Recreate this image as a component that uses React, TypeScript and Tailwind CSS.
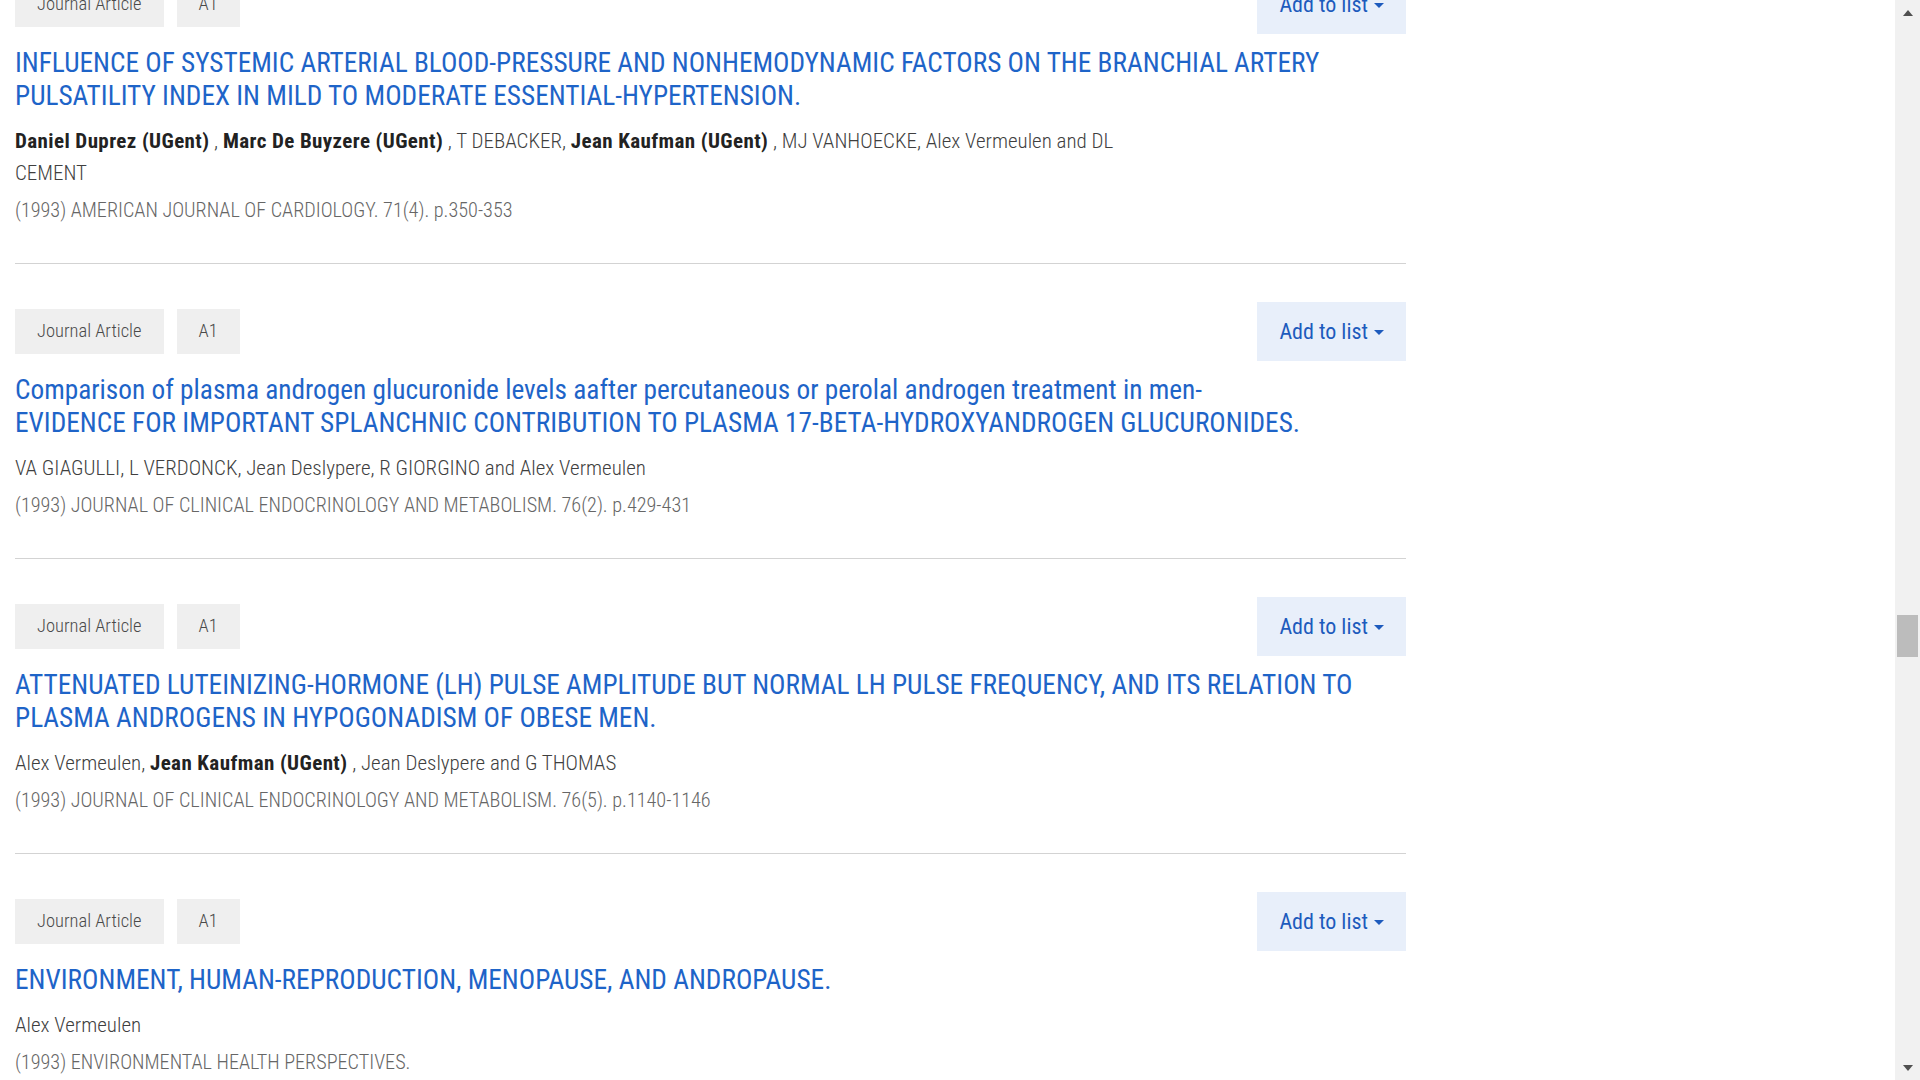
type Author = { name: string; ugent?: boolean };

type Publication = {
  id: number;
  title: string;
  authors: Author[];
  source: string;
};

const publications: Publication[] = [
  {
    id: 1,
    title:
      "INFLUENCE OF SYSTEMIC ARTERIAL BLOOD-PRESSURE AND NONHEMODYNAMIC FACTORS ON THE BRANCHIAL ARTERY PULSATILITY INDEX IN MILD TO MODERATE ESSENTIAL-HYPERTENSION.",
    authors: [
      { name: "Daniel Duprez (UGent)", ugent: true },
      { name: "Marc De Buyzere (UGent)", ugent: true },
      { name: "T DEBACKER" },
      { name: "Jean Kaufman (UGent)", ugent: true },
      { name: "MJ VANHOECKE" },
      { name: "Alex Vermeulen" },
      { name: "DL CEMENT" },
    ],
    source: "(1993) AMERICAN JOURNAL OF CARDIOLOGY. 71(4). p.350-353",
  },
  {
    id: 2,
    // the original title breaks right after "men-"
    title:
      "Comparison of plasma androgen glucuronide levels aafter percutaneous or perolal androgen treatment in men-\nEVIDENCE FOR IMPORTANT SPLANCHNIC CONTRIBUTION TO PLASMA 17-BETA-HYDROXYANDROGEN GLUCURONIDES.",
    authors: [
      { name: "VA GIAGULLI" },
      { name: "L VERDONCK" },
      { name: "Jean Deslypere" },
      { name: "R GIORGINO" },
      { name: "Alex Vermeulen" },
    ],
    source: "(1993) JOURNAL OF CLINICAL ENDOCRINOLOGY AND METABOLISM. 76(2). p.429-431",
  },
  {
    id: 3,
    title:
      "ATTENUATED LUTEINIZING-HORMONE (LH) PULSE AMPLITUDE BUT NORMAL LH PULSE FREQUENCY, AND ITS RELATION TO PLASMA ANDROGENS IN HYPOGONADISM OF OBESE MEN.",
    authors: [
      { name: "Alex Vermeulen" },
      { name: "Jean Kaufman (UGent)", ugent: true },
      { name: "Jean Deslypere" },
      { name: "G THOMAS" },
    ],
    source: "(1993) JOURNAL OF CLINICAL ENDOCRINOLOGY AND METABOLISM. 76(5). p.1140-1146",
  },
  {
    id: 4,
    title: "ENVIRONMENT, HUMAN-REPRODUCTION, MENOPAUSE, AND ANDROPAUSE.",
    authors: [{ name: "Alex Vermeulen" }],
    source: "(1993) ENVIRONMENTAL HEALTH PERSPECTIVES.",
  },
];

function AuthorList({ authors }: { authors: Author[] }) {
  return (
    <p className="mt-[12px] max-w-[1130px] text-[21px] leading-[32px] font-light text-[#3f3f3f]">
      {authors.map((a, i) => {
        const last = i === authors.length - 1;
        const sep = last ? "" : i === authors.length - 2 ? " and " : a.ugent ? " , " : ", ";
        return (
          <span key={a.name}>
            {a.ugent ? (
              <span className="font-bold tracking-[0.4px] text-[#222]">{a.name}</span>
            ) : (
              a.name
            )}
            {sep}
          </span>
        );
      })}
    </p>
  );
}

function Badge({ children }: { children: React.ReactNode }) {
  return (
    <span className="flex h-[45px] items-center bg-[#efefef] px-[22px] text-[18.5px] font-light text-[#4a4a4a]">
      {children}
    </span>
  );
}

function PublicationItem({ pub }: { pub: Publication }) {
  return (
    <article className="border-t border-[#d3d3d3] pt-[38px] pb-[38px]">
      <div className="flex h-[59px] items-center justify-between">
        <div className="flex gap-[13px]">
          <Badge>Journal Article</Badge>
          <Badge>A1</Badge>
        </div>
        <button className="flex h-[59px] items-center gap-[6px] bg-[#e8effa] px-[22px] text-[22px] text-[#1d5bbd]">
          Add to list
          <span className="mt-[2px] h-0 w-0 border-x-[5px] border-t-[5px] border-x-transparent border-t-current" />
        </button>
      </div>
      <h2 className="mt-[13px] whitespace-pre-line text-[27.3px] leading-[33px] text-[#1e64c8]">
        <a href="#">{pub.title}</a>
      </h2>
      <AuthorList authors={pub.authors} />
      <p className="mt-[6px] text-[20.2px] leading-[30px] font-light text-[#666]">{pub.source}</p>
    </article>
  );
}

function Scrollbar() {
  return (
    <div className="flex w-[25px] shrink-0 flex-col bg-[#f1f1f1]">
      <div className="flex h-[25px] items-center justify-center">
        <span className="h-0 w-0 border-x-[5px] border-b-[6px] border-x-transparent border-b-[#505050]" />
      </div>
      <div className="flex-1">
        <div className="mx-[2px] mt-[590px] h-[42px] bg-[#bcbcbc]" />
      </div>
      <div className="flex h-[25px] items-center justify-center">
        <span className="h-0 w-0 border-x-[5px] border-t-[6px] border-x-transparent border-t-[#505050]" />
      </div>
    </div>
  );
}

export default function App() {
  return (
    <div className="flex h-screen overflow-hidden bg-white font-['Roboto',sans-serif] font-stretch-75%">
      <main className="flex-1 overflow-hidden">
        <div className="-mt-[64px] ml-[15px] w-[1391px]">
          {publications.map((pub) => (
            <PublicationItem key={pub.id} pub={pub} />
          ))}
        </div>
      </main>
      <Scrollbar />
    </div>
  );
}
